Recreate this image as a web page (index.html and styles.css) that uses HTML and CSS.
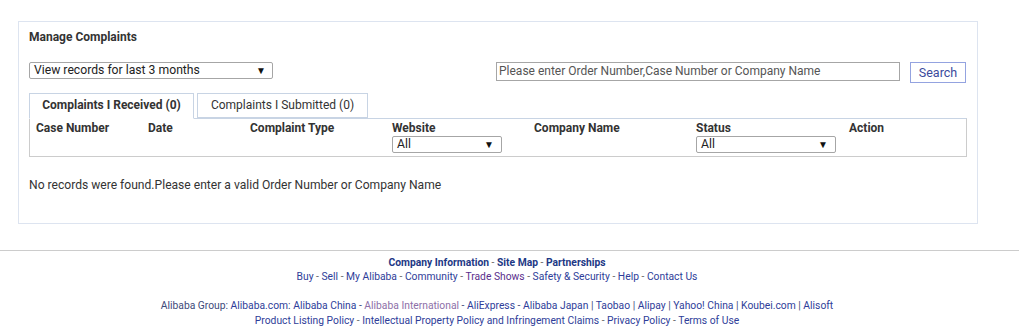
FILE: index.html
```html
<!DOCTYPE html>
<html lang="en">
  <head>
    <meta charset="UTF-8" />
    <title>Manage Complaints</title>
    <link rel="stylesheet" href="styles.css">
  </head>
  <body>
    <div class="panel">
      <h2 class="panel-title">Manage Complaints</h2>

      <div class="toolbar">
        <div class="dropdown period">
          <span>View records for last 3 months</span>
          <span class="arrow">&#9660;</span>
        </div>
        <div class="search">
          <div class="search-input">Please enter Order Number,Case Number or Company Name</div>
          <button class="search-btn">Search</button>
        </div>
      </div>

      <div class="tabs">
        <div class="tab active">Complaints I Received (0)</div>
        <div class="tab">Complaints I Submitted (0)</div>
      </div>

      <div class="grid">
        <div class="col c1">Case Number</div>
        <div class="col c2">Date</div>
        <div class="col c3">Complaint Type</div>
        <div class="col c4">
          Website
          <div class="dropdown small w-site">
            <span>All</span>
            <span class="arrow">&#9660;</span>
          </div>
        </div>
        <div class="col c5">Company Name</div>
        <div class="col c6">
          Status
          <div class="dropdown small w-status">
            <span>All</span>
            <span class="arrow">&#9660;</span>
          </div>
        </div>
        <div class="col c7">Action</div>
      </div>

      <p class="empty">No records were found.Please enter a valid Order Number or Company Name</p>
    </div>

    <div class="footer">
      <div class="footer-inner">
        <div class="line strong">
          <a href="#">Company Information</a> - <a href="#">Site Map</a> - <a href="#">Partnerships</a>
        </div>
        <div class="line">
          <a href="#">Buy</a> - <a href="#">Sell</a> - <a href="#">My Alibaba</a> - <a href="#">Community</a> - <a href="#" class="visited">Trade Shows</a> - <a href="#">Safety &amp; Security</a> - <a href="#">Help</a> - <a href="#">Contact Us</a>
        </div>
        <div class="line group">
          Alibaba Group: <a href="#">Alibaba.com</a>: <a href="#">Alibaba China</a> - <a href="#" class="faded">Alibaba International</a> - <a href="#">AliExpress</a> - <a href="#">Alibaba Japan</a> | <a href="#">Taobao</a> | <a href="#">Alipay</a> | <a href="#">Yahoo! China</a> | <a href="#">Koubei.com</a> | <a href="#">Alisoft</a>
        </div>
        <div class="line">
          <a href="#">Product Listing Policy</a> - <a href="#">Intellectual Property Policy and Infringement Claims</a> - <a href="#">Privacy Policy</a> - <a href="#">Terms of Use</a>
        </div>
      </div>
    </div>
  </body>
</html>
```

FILE: styles.css
```css
body {
  margin: 0;
  font-family: Roboto, "Liberation Sans", sans-serif;
  font-size: 12px;
  color: #333;
  background: #fff;
}
.panel {
  width: 938px;
  margin: 21px 0 0 18px;
  padding: 7px 10px 30px 10px;
  border: 1px solid #dde4f0;
}
.panel-title {
  font-size: 12px;
  font-weight: bold;
  margin: 0;
  height: 16px;
  line-height: 16px;
}
.toolbar {
  display: flex;
  justify-content: space-between;
  align-items: flex-start;
  margin-top: 17px;
}
.dropdown {
  display: flex;
  justify-content: space-between;
  align-items: center;
  border: 1px solid #a6a6a6;
  border-radius: 2px;
  background: #fff;
  color: #222;
  box-sizing: border-box;
  font-size: 12.2px;
}
.dropdown .arrow {
  font-size: 10px;
  color: #111;
}
.period {
  width: 244px;
  height: 17px;
  padding: 0 6px 0 4px;
  line-height: 15px;
}
.search {
  display: flex;
  align-items: flex-start;
  gap: 10px;
  margin-right: 1px;
}
.search-input {
  width: 404px;
  height: 19px;
  box-sizing: border-box;
  border: 1px solid #a6a6a6;
  padding: 0 2px;
  line-height: 17px;
  font-size: 12px;
  color: #555;
}
.search-btn {
  width: 56px;
  height: 21px;
  border: 1px solid #94a3e0;
  background: #fff;
  color: #3b4a9c;
  font-family: Roboto, "Liberation Sans", sans-serif;
  font-size: 12.5px;
  padding: 0;
}
.tabs {
  display: flex;
  gap: 3px;
  margin-top: 10px;
}
.tab {
  height: 25px;
  line-height: 23px;
  box-sizing: border-box;
  border: 1px solid #c8d4e4;
  text-align: center;
  background: #fff;
  color: #333;
  position: relative;
  z-index: 1;
}
.tab:first-child {
  width: 165px;
}
.tab:nth-child(2) {
  width: 171px;
}
.tab.active {
  font-weight: bold;
  border-bottom-color: #fff;
  height: 26px;
}
.grid {
  display: grid;
  grid-template-columns: 112px 102px 142px 142px 162px 153px 1fr;
  height: 39px;
  box-sizing: border-box;
  margin-top: -1px;
  border: 1px solid #ccc;
  border-top-color: #c8d4e4;
  padding: 2px 0 0 6px;
  font-weight: bold;
  line-height: 15px;
}
.dropdown.small {
  height: 17px;
  padding: 0 7px 0 4px;
  font-weight: normal;
  line-height: 15px;
}
.w-site {
  width: 110px;
}
.w-status {
  width: 140px;
}
.empty {
  margin: 21px 0 0 0;
  line-height: 15px;
  font-size: 12.1px;
  color: #333;
}
.footer {
  margin-top: 26px;
  border-top: 1px solid #ccc;
  padding: 5px 0 0 0;
}
.footer-inner {
  width: 994px;
  text-align: center;
  font-size: 10.3px;
  color: #666;
}
.footer a {
  color: #2e3d99;
  text-decoration: none;
}
.line {
  line-height: 14px;
}
.line.strong a {
  font-weight: bold;
  color: #1d3885;
}
.line.group {
  margin-top: 14px;
  color: #3e4a7a;
  line-height: 16px;
}
.footer a.visited {
  color: #5a2e8c;
}
.footer a.faded {
  color: #8d70a8;
}
```
